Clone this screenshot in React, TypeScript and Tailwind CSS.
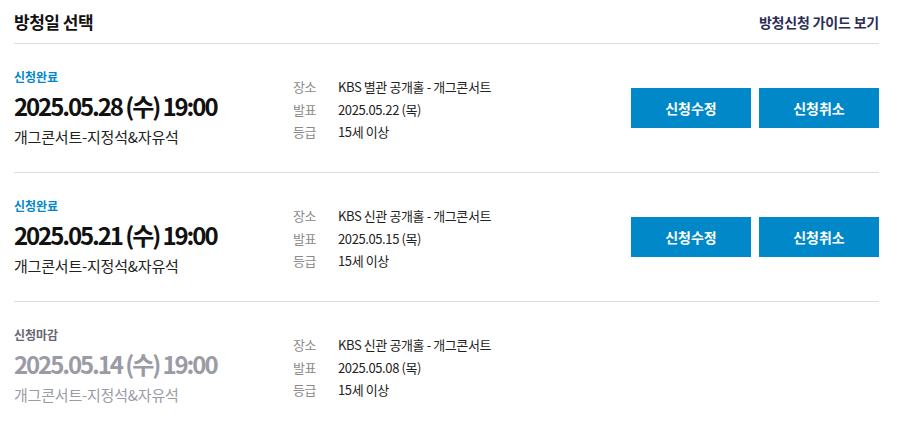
const items = [
  {
    status: '신청완료',
    date: '2025.05.28 (수) 19:00',
    place: 'KBS 별관 공개홀 - 개그콘서트',
    announce: '2025.05.22 (목)',
    closed: false,
  },
  {
    status: '신청완료',
    date: '2025.05.21 (수) 19:00',
    place: 'KBS 신관 공개홀 - 개그콘서트',
    announce: '2025.05.15 (목)',
    closed: false,
  },
  {
    status: '신청마감',
    date: '2025.05.14 (수) 19:00',
    place: 'KBS 신관 공개홀 - 개그콘서트',
    announce: '2025.05.08 (목)',
    closed: true,
  },
];

export default function App() {
  return (
    <div className="min-h-[429px] bg-white pl-[14px] pr-[21px] text-[#111] [font-family:'Noto_Sans_CJK_KR',sans-serif]">
      <header className="flex h-[44px] items-center justify-between border-b border-[#dcdcdc] pt-[1px]">
        <h2 className="text-[17px] font-bold tracking-[-0.5px]">방청일 선택</h2>
        <a className="text-[14px] font-bold tracking-[-0.2px] text-[#2b2d55]">방청신청 가이드 보기</a>
      </header>
      {items.map((item, i) => (
        <section
          key={i}
          className={`flex h-[129px] items-start border-[#dcdcdc] pt-[24px] ${i < items.length - 1 ? 'border-b' : ''}`}
        >
          <div className="w-[279px] shrink-0">
            <p className={`text-[12px] leading-[18px] font-bold ${item.closed ? 'text-[#666670]' : 'text-[#0088cc]'}`}>
              {item.status}
            </p>
            <p className={`mt-[5px] text-[24px] leading-[30px] font-bold tracking-[-2.1px] ${item.closed ? 'text-[#9b9ba6]' : 'text-[#111]'}`}>
              {item.date}
            </p>
            <p className={`mt-[5px] text-[15px] leading-[22px] tracking-[-0.2px] ${item.closed ? 'text-[#9b9ba6]' : 'text-[#222]'}`}>
              개그콘서트-지정석&자유석
            </p>
          </div>
          <dl className="mt-[8px] grid grid-cols-[45px_auto] text-[13px] leading-[22.5px] tracking-[-0.4px]">
            <dt className="text-[#8a8a8a]">장소</dt>
            <dd className="text-[#222]">{item.place}</dd>
            <dt className="text-[#8a8a8a]">발표</dt>
            <dd className="text-[#222]">{item.announce}</dd>
            <dt className="text-[#8a8a8a]">등급</dt>
            <dd className="text-[#222]">15세 이상</dd>
          </dl>
          {!item.closed && (
            <div className="ml-auto mt-[20px] flex gap-[8px]">
              <button type="button" className="h-[40px] w-[120px] bg-[#0088c9] text-[14px] font-bold text-white">
                신청수정
              </button>
              <button type="button" className="h-[40px] w-[120px] bg-[#0088c9] text-[14px] font-bold text-white">
                신청취소
              </button>
            </div>
          )}
        </section>
      ))}
    </div>
  );
}
